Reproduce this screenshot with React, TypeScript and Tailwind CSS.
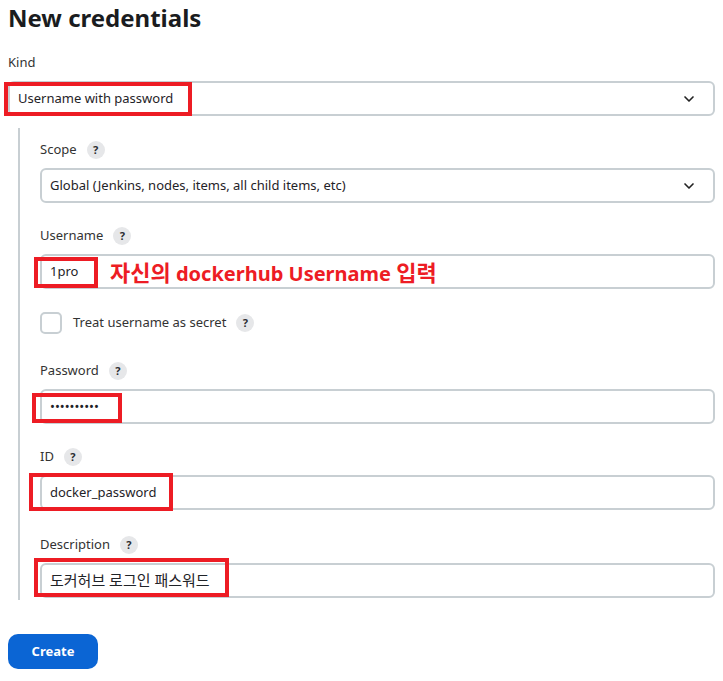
import { ChevronDown } from "lucide-react";

const font = { fontFamily: '"Noto Sans", "Noto Sans CJK KR", sans-serif' };

function Help() {
  return (
    <span className="ml-[10px] inline-flex h-[18px] w-[18px] items-center justify-center rounded-full bg-[#e6e7e9] text-[11px] font-bold text-[#2b2d31]">
      ?
    </span>
  );
}

function Label({ text, help = true }: { text: string; help?: boolean }) {
  return (
    <div className="flex h-5 items-center pt-[2px] text-[13px] text-[#333]">
      {text}
      {help && <Help />}
    </div>
  );
}

function Select({ value, children }: { value: string; children?: React.ReactNode }) {
  return (
    <div className="relative flex h-[35px] items-center justify-between rounded-[6px] border-2 border-[#c8cfd3] pl-2 pr-4 text-[13px] text-[#1f2328]">
      <span>{value}</span>
      <ChevronDown size={16} strokeWidth={2.5} className="text-[#222]" />
      {children}
    </div>
  );
}

function Input({ value, children }: { value: React.ReactNode; children?: React.ReactNode }) {
  return (
    <div className="relative flex h-[35px] items-center rounded-[6px] border-2 border-[#c8cfd3] pl-2 text-[13px] text-[#1f2328]">
      <span>{value}</span>
      {children}
    </div>
  );
}

function RedBox({ className }: { className: string }) {
  return <div className={`pointer-events-none absolute border-4 border-[#ed1c24] ${className}`} />;
}

export default function App() {
  return (
    <div className="min-h-[681px] w-[723px] bg-white px-2" style={font}>
      <h1 className="flex h-[36px] items-center text-[24px] font-bold leading-none text-[#1a1c20]">New credentials</h1>

      <div className="mt-4">
        <Label text="Kind" help={false} />
        <div className="mt-[9px]">
          <Select value="Username with password">
            <RedBox className="-left-[6px] -top-[1px] h-[34px] w-[188px]" />
          </Select>
        </div>
      </div>

      <div className="mt-3 ml-[10px] border-l-2 border-[#c8cfd3] pb-[2px] pl-5 pt-[11px]">
        <Label text="Scope" />
        <div className="mt-[9px]">
          <Select value="Global (Jenkins, nodes, items, all child items, etc)" />
        </div>

        <div className="mt-[22px]">
          <Label text="Username" />
          <div className="mt-[9px]">
            <Input value="1pro">
              <RedBox className="-left-[8px] top-[1px] h-[31px] w-[64px]" />
              <span className="absolute left-[68px] top-1/2 -translate-y-1/2 whitespace-nowrap text-[20px] font-bold text-[#ed1c24]">
                <span className="text-[22px]">자신의</span> dockerhub Username <span className="text-[22px]">입력</span>
              </span>
            </Input>
          </div>
        </div>

        <div className="mt-[23px] flex h-[22px] items-center text-[13px] text-[#333]">
          <span className="mr-[11px] h-[22px] w-[22px] rounded-[5px] border-2 border-[#c8cfd3]" />
          Treat username as secret
          <Help />
        </div>

        <div className="mt-[26px]">
          <Label text="Password" />
          <div className="mt-[9px]">
            <Input value="••••••••••">
              <RedBox className="-left-[10px] top-[2px] h-[30px] w-[90px]" />
            </Input>
          </div>
        </div>

        <div className="mt-[22px]">
          <Label text="ID" />
          <div className="mt-[9px]">
            <Input value="docker_password">
              <RedBox className="-left-[13px] -top-[4px] h-[38px] w-[144px]" />
            </Input>
          </div>
        </div>

        <div className="mt-[24px]">
          <Label text="Description" />
          <div className="mt-[9px]">
            <Input value={<span className="text-[15px]">도커허브 로그인 패스워드</span>}>
              <RedBox className="-left-[8px] -top-[7px] h-[39px] w-[195px]" />
            </Input>
          </div>
        </div>
      </div>

      <button className="mt-[34px] h-[35px] w-[90px] rounded-[10px] bg-[#0b65d4] text-[13px] font-bold text-white">
        Create
      </button>
    </div>
  );
}
